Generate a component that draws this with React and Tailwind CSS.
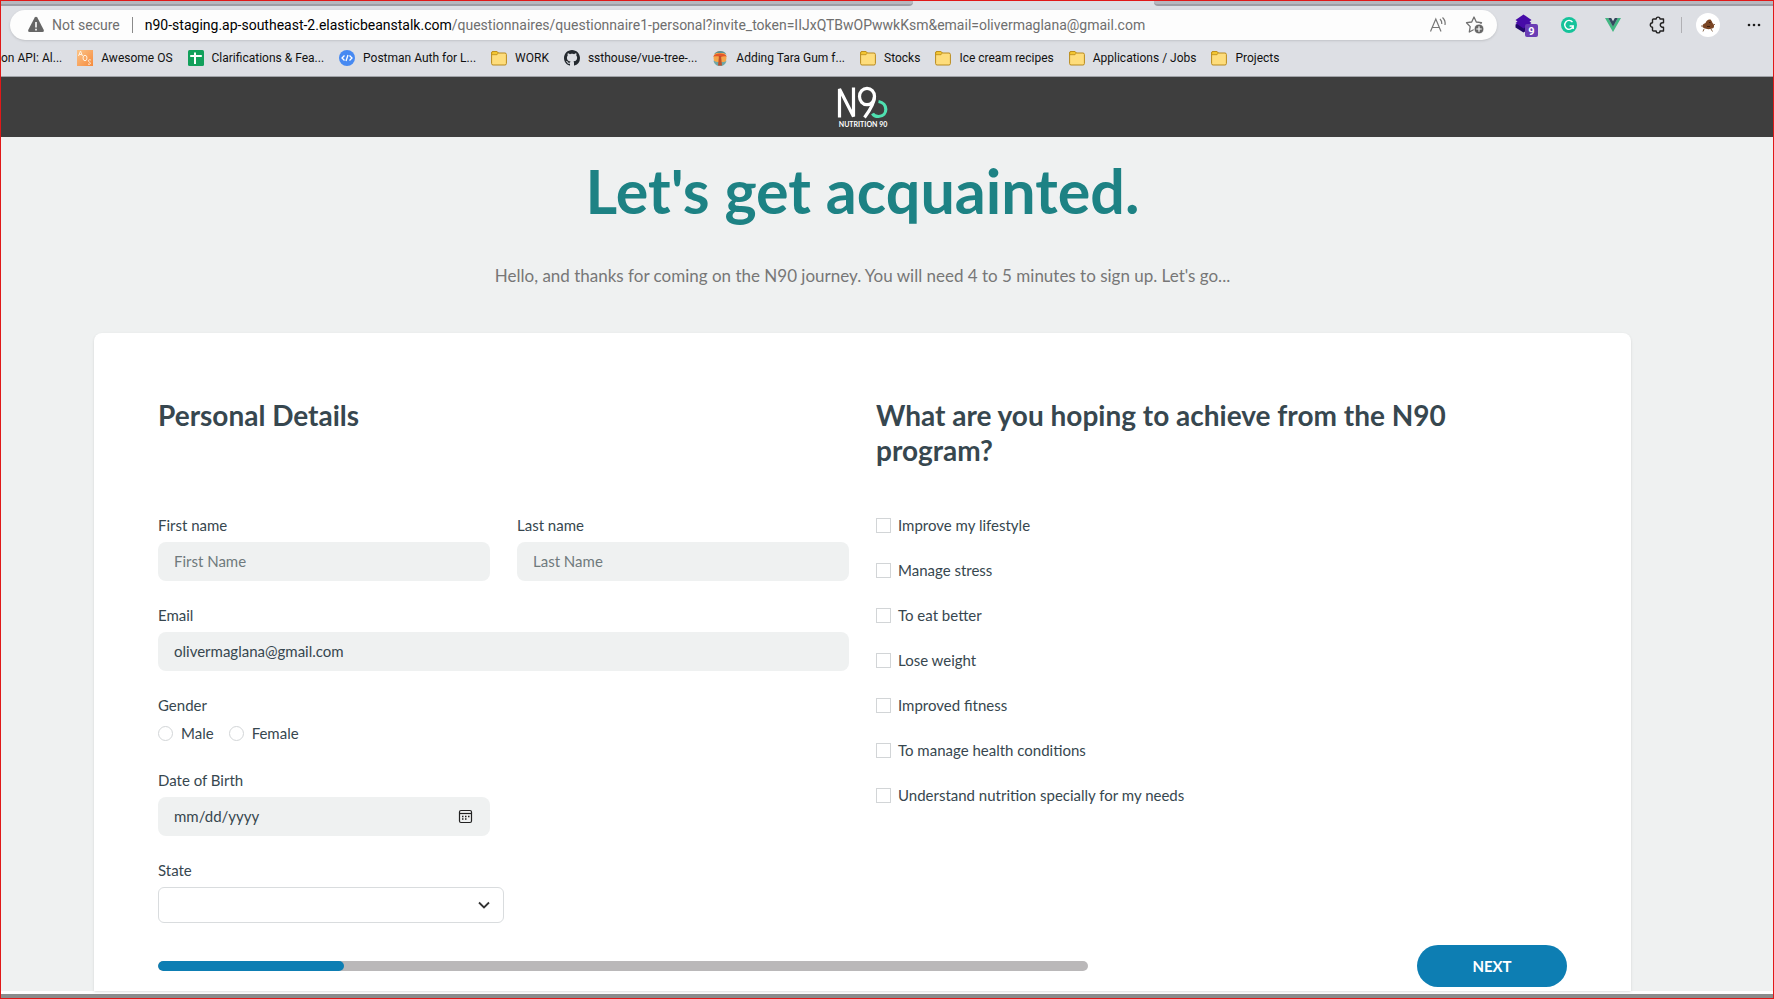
import React from "react";

const UI = "font-['Roboto',sans-serif]";

const Folder = () => (
  <svg width="16" height="18" viewBox="0 0 16 18" className="shrink-0">
    <path d="M.6 4Q.6 2.500 2.100 2.500H6L7.500 4h6.400q1.500 0 1.500 1.500v9q0 1.500-1.500 1.500H2.100Q.6 16 .6 14.500z" fill="#fedd7c" stroke="#b98a1c" />
    <path d="M.6 4Q.6 2.500 2 2.500h3.800L7.300 4 6 5.700H.6z" fill="#f3c632" stroke="#b98a1c" strokeWidth=".8" />
  </svg>
);

const Aos = () => (
  <svg width="16" height="18" viewBox="0 0 16 18" className="shrink-0">
    <defs>
      <linearGradient id="aos" x1="0" y1="0" x2="1" y2="1">
        <stop offset="0" stopColor="#fbc488" />
        <stop offset="1" stopColor="#f68a3c" />
      </linearGradient>
    </defs>
    <rect y="1" width="16" height="16" fill="url(#aos)" />
    <g fill="none" stroke="#fff3e2" strokeWidth="1">
      <path d="M1.500 7 3.500 2l2 5M2.200 5.500h2.600" />
      <ellipse cx="8" cy="9" rx="2" ry="2.700" />
      <path d="M13.800 11c-2.500-1-3.200 1.300-1.500 2s1.700 3-1.300 2" />
    </g>
  </svg>
);

const Sheet = () => (
  <svg width="16" height="18" viewBox="0 0 16 18" className="shrink-0">
    <rect y="1" width="16" height="16" rx="1.500" fill="#12a05b" />
    <path d="M7 3.500v11.500M2.200 7h11.600" stroke="#fff" strokeWidth="2" />
  </svg>
);

const CodeDot = () => (
  <svg width="16" height="18" viewBox="0 0 16 18" className="shrink-0">
    <circle cx="8" cy="9" r="8" fill="#4689f2" />
    <path d="M5.500 6.500 3 9l2.500 2.500M10.500 6.500 13 9l-2.500 2.500M9 6 7 12" fill="none" stroke="#fff" strokeWidth="1.300" />
  </svg>
);

const Github = () => (
  <svg width="16" height="16" viewBox="0 0 16 16" className="shrink-0">
    <path
      fill="#24292f"
      d="M8 0C3.580 0 0 3.580 0 8c0 3.540 2.290 6.530 5.470 7.590.4.070.55-.17.55-.38 0-.19-.01-.82-.01-1.490-2.010.37-2.530-.49-2.690-.94-.09-.23-.48-.94-.82-1.130-.28-.15-.68-.52-.01-.53.63-.01 1.080.58 1.230.82.72 1.210 1.870.87 2.330.66.07-.52.28-.87.51-1.070-1.780-.2-3.640-.89-3.640-3.950 0-.87.31-1.590.82-2.150-.08-.2-.36-1.020.08-2.120 0 0 .67-.21 2.200.82.64-.18 1.320-.27 2-.27s1.360.09 2 .27c1.530-1.040 2.200-.82 2.200-.82.44 1.100.16 1.920.08 2.120.51.56.82 1.270.82 2.150 0 3.070-1.870 3.750-3.650 3.950.29.25.54.73.54 1.480 0 1.070-.01 1.930-.01 2.200 0 .21.15.46.55.38A8.010 8.010 0 0 0 16 8c0-4.420-3.580-8-8-8z"
    />
  </svg>
);

const Palm = () => (
  <svg width="16" height="18" viewBox="0 0 16 18" className="shrink-0">
    <ellipse cx="8" cy="9" rx="6.500" ry="7" fill="#f4a64a" />
    <path d="M2 5.500C4 1 12 .500 14.500 5.500l-3-1.500-7 0z" fill="#5b9095" />
    <path d="M1 7.800c2-4.300 12-4.300 14 0-2-.8-4.500-.5-6 .3-2-.8-5.500-1-8-.3z" fill="#e2562b" />
    <path d="M1.500 11.500c2 1 3 1.500 5 1.500h4c2 0 3-.5 4-1.500-.5 3.500-3 5.500-6.500 5.500s-6-2-6.500-5.500z" fill="#6fa7a6" />
    <path d="M7 7h2l1 9.500H6z" fill="#c0502a" />
  </svg>
);

const BOOKMARKS = [
  [Aos, "Awesome OS"],
  [Sheet, "Clarifications & Fea..."],
  [CodeDot, "Postman Auth for L..."],
  [Folder, "WORK"],
  [Github, "ssthouse/vue-tree-..."],
  [Palm, "Adding Tara Gum f..."],
  [Folder, "Stocks"],
  [Folder, "Ice cream recipes"],
  [Folder, "Applications / Jobs"],
  [Folder, "Projects"],
];

function AddressBar() {
  return (
    <div className="flex h-[30px] grow items-center rounded-full bg-[#fdfdfd] pr-3 pl-[17px] text-sm text-[#6f6f6f] shadow-sm">
      <svg width="18" height="18" viewBox="0 0 18 18" className="shrink-0">
        <path d="M7.700 1.500q1.300-1.500 2.600 0l6.500 12.500q.7 2-1.300 2h-13q-2 0-1.300-2z" fill="#666" />
        <path d="M9 6v5.500M9 12.800v1.600" stroke="#fff" strokeWidth="1.600" />
      </svg>
      <span className="ml-[7px] whitespace-nowrap">Not secure</span>
      <span className="mx-3 h-4 w-px bg-[#8a8a8a]" />
      <span className="grow whitespace-nowrap">
        <span className="text-black">n90-staging.ap-southeast-2.elasticbeanstalk.com</span>
        /questionnaires/questionnaire1-personal?invite_token=IIJxQTBwOPwwkKsm&amp;email=olivermaglana@gmail.com
      </span>
      <button aria-label="Read aloud" className="mr-[18px]">
        <svg width="18" height="18" viewBox="0 0 18 18" fill="none" stroke="#777" strokeWidth="1.200">
          <path d="M1.500 15.500 6.800 3l5.200 12.500M3.500 11.500H10" />
          <path d="M11 3q2 1.800 1.800 5M13.500 1.500Q16.800 4.500 16 9" />
        </svg>
      </button>
      <button aria-label="Add to favorites">
        <svg width="20" height="20" viewBox="0 0 20 20">
          <path d="m9 2 2.300 5 5.200.7-3.800 3.900.9 5.400L9 14.500 4.300 17l.9-5.400L1.500 7.700 6.700 7z" fill="none" stroke="#707070" strokeWidth="1.300" strokeLinejoin="round" />
          <circle cx="14" cy="14" r="5" fill="#666" stroke="#fdfdfd" />
          <path d="M14 11.300v5.400M11.300 14h5.400" stroke="#fff" strokeWidth="1.200" />
        </svg>
      </button>
    </div>
  );
}

function Browser() {
  return (
    <div className={`bg-[#dddfe4] ${UI}`}>
      <div className="flex h-[5px]">
        <div className="w-[912px] rounded-br border-b-2 border-[#9d9ea5] bg-[#b7b8bf]" />
        <div className="w-[241px]" />
        <div className="grow rounded-bl border-b-2 border-[#9d9ea5] bg-[#b7b8bf]" />
      </div>
      <div className="flex h-[38px] items-center pl-[9px]">
        <AddressBar />
        <div className="flex w-[276px] shrink-0 items-center pl-[18px]">
          <button aria-label="Extension with 9 notices" className="mr-[22px]">
            <svg width="24" height="24" viewBox="0 0 24 24">
              <path d="M.5 11.500 8.500 8l8 3.500v3l-8 5-8-5z" fill="#22086b" />
              <path d="m8.500 1.500 8 5.500-2 1.500 2 1.500-8 5.500-8-5.500 2-1.500-2-1.500z" fill="#470ba8" />
              <rect x="10" y="11" width="13" height="13" rx="2" fill="#6a3db5" />
              <text x="16.500" y="21.500" fontSize="11" fontWeight="700" fill="#fff" textAnchor="middle">9</text>
            </svg>
          </button>
          <button aria-label="Grammar checker" className="mr-7">
            <svg width="16" height="18" viewBox="0 0 16 18">
              <circle cx="8" cy="9" r="8" fill="#15c39a" />
              <path d="M11.500 6.200A4.300 4.500 0 1 0 12.200 10H8.600M12.200 10v3" fill="none" stroke="#fff" strokeWidth="1.400" />
            </svg>
          </button>
          <button aria-label="Vue devtools" className="mr-7">
            <svg width="16" height="16" viewBox="0 0 16 16">
              <path d="M0 1h3.200L8 9.500 12.800 1H16L8 15z" fill="#42b883" />
              <path d="M3.200 1h3L8 4.200 9.800 1h3L8 9.800z" fill="#35495e" />
            </svg>
          </button>
          <button aria-label="Extensions" className="mr-[14px]">
            <svg width="18" height="18" viewBox="0 0 18 18" fill="none" stroke="#222" strokeWidth="1.400" strokeLinejoin="round">
              <path d="M4.500 3h2.700a1.900 1.900 0 0 1 3.800 0h3.500v3.800h-1a2.200 2.200 0 0 0 0 4.400h1V15H11a1.900 1.900 0 0 1-3.800 0H4.500q-1 0-1-1v-2.800a2.200 2.200 0 0 1 0-4.400V4q0-1 1-1z" />
            </svg>
          </button>
          <span className="mr-[14px] h-4 w-px bg-[#b0b0b4]" />
          <button aria-label="Profile" className="mr-[26px] flex size-6 items-center justify-center rounded-full bg-white">
            <svg width="16" height="16" viewBox="0 0 16 16">
              <path d="M2.500 10Q2 7 5.500 6 7 1.800 10.500 2.500 12 4 12.500 6q2.500 2 1 5-3 1.500-6.500 1-3.500-.5-4.500-2z" fill="#7a4524" />
              <path d="M7 9.500h3M9 5.500h1.500" stroke="#3d2010" />
              <path d="m4 12-1 2.500M11 12l1.500 2.500M2.500 9H1M14 8l1-1" stroke="#8a6a50" />
            </svg>
          </button>
          <button aria-label="Settings and more">
            <svg width="16" height="4" viewBox="0 0 16 4" fill="#1c1c1c">
              <circle cx="3" cy="2" r="1.300" />
              <circle cx="8" cy="2" r="1.300" />
              <circle cx="13" cy="2" r="1.300" />
            </svg>
          </button>
        </div>
      </div>
      <nav className="flex h-[33px] items-start gap-[15px] overflow-hidden border-b border-[#a0a3a8] pt-[5px] text-xs text-[#111]">
        <a href="#api" className="whitespace-nowrap leading-[18px]">on API: Al...</a>
        {BOOKMARKS.map(([Icon, name]) => (
          <a key={name} href="#bookmark" className="flex items-center gap-2 whitespace-nowrap leading-[18px]">
            <Icon />
            {name}
          </a>
        ))}
      </nav>
    </div>
  );
}

function Logo() {
  return (
    <svg width="52" height="42" viewBox="0 0 52 42" role="img" aria-label="Nutrition 90">
      <g fill="none" strokeWidth="3.200">
        <path d="M2.500 31.500V3L16.500 30.500V1.500" stroke="#fff" strokeLinejoin="bevel" />
        <ellipse cx="30" cy="10.500" rx="7.500" ry="8.200" stroke="#fff" />
        <path d="M37.500 10.500C37.500 17.500 32 25.500 27.500 31.500" stroke="#fff" />
        <path d="M41.500 15.500c9.500 1.500 10 14.500 0 15-3 0-5-1-6-3" stroke="#4fe0b0" />
      </g>
      <text x="26" y="41" fontSize="7" fontWeight="700" fill="#fff" textAnchor="middle">NUTRITION 90</text>
    </svg>
  );
}

const FIELD = "h-[39px] w-full rounded-lg bg-[#eff1f1] px-4 pb-0.5 text-[15px] text-[#37474f] placeholder-[#6f7a7d] outline-none";

function Field({ id, label, className = "", children }) {
  return (
    <div className={`flex flex-col ${className}`}>
      <label htmlFor={id} className="mb-[7px] leading-5">{label}</label>
      {children}
    </div>
  );
}

const GOALS = [
  "Improve my lifestyle",
  "Manage stress",
  "To eat better",
  "Lose weight",
  "Improved fitness",
  "To manage health conditions",
  "Understand nutrition specially for my needs",
];

export default function App() {
  return (
    <div className="flex min-h-screen flex-col border border-[#e01818] bg-white font-['Lato',sans-serif] text-[15px] text-[#37474f]">
      <Browser />
      <header className="flex h-[60px] items-center justify-center bg-[#3e3e3e] pr-12">
        <Logo />
      </header>
      <main className="bg-[#eff1f1] pr-[142px] pl-[93px]">
        <h1 className="pt-[18px] text-center text-[61px] leading-[72px] font-bold text-[#1d8284]">Let's get acquainted.</h1>
        <p className="pt-[37px] pb-[45px] text-center text-[17px] leading-6 text-[#777]">
          Hello, and thanks for coming on the N90 journey. You will need 4 to 5 minutes to sign up. Let's go...
        </p>
        <form className="rounded-t-lg bg-white px-16 pt-[65px] pb-1 shadow-sm" onSubmit={(e) => e.preventDefault()}>
          <div className="grid grid-cols-2 gap-x-[27px]">
            <h2 className="h-[117px] text-[28px] leading-[35px] font-bold">Personal Details</h2>
            <h2 className="text-[28px] leading-[35px] font-bold">What are you hoping to achieve from the N90 program?</h2>
            <div className="flex flex-col">
              <div className="grid grid-cols-2 gap-x-[27px]">
                <Field id="first" label="First name">
                  <input id="first" placeholder="First Name" className={FIELD} />
                </Field>
                <Field id="last" label="Last name">
                  <input id="last" placeholder="Last Name" className={FIELD} />
                </Field>
              </div>
              <Field id="email" label="Email" className="mt-6">
                <input id="email" type="email" defaultValue="olivermaglana@gmail.com" className={FIELD} />
              </Field>
              <fieldset className="mt-6">
                <legend className="leading-5">Gender</legend>
                <div className="mt-2 flex gap-[15px]">
                  {["Male", "Female"].map((g) => (
                    <label key={g} className="flex items-center gap-2 leading-5">
                      <input type="radio" name="gender" className="size-[15px] appearance-none rounded-full border border-[#d2d5d7] bg-white" />
                      {g}
                    </label>
                  ))}
                </div>
              </fieldset>
              <div className="grid grid-cols-2 gap-x-[27px]">
                <Field id="dob" label="Date of Birth" className="mt-[27px]">
                  <div className="relative">
                    <input id="dob" placeholder="mm/dd/yyyy" className={`${FIELD} placeholder-[#37474f]`} />
                    <button type="button" aria-label="Open calendar" className="absolute top-3 right-[17px]">
                      <svg width="15" height="15" viewBox="0 0 15 15" fill="none" stroke="#222">
                        <rect x="1.500" y="1.500" width="12" height="12" rx="1.500" strokeWidth="1.200" />
                        <path d="M1.500 4.500h12" strokeWidth="1.200" />
                        <path d="M4 7.500h7.500M4 10h4.500" strokeWidth="1.500" strokeDasharray="1.500 1.500" />
                      </svg>
                    </button>
                  </div>
                </Field>
              </div>
              <Field id="state" label="State" className="mt-6 w-1/2">
                <div className="relative">
                  <select id="state" className="block h-9 w-full appearance-none rounded-md border border-[#d9dcde] bg-white px-4 outline-none" />
                  <svg width="12" height="8" viewBox="0 0 12 8" className="pointer-events-none absolute top-3.5 right-3.5" fill="none" stroke="#333" strokeWidth="1.800">
                    <path d="m1 1.500 5 5 5-5" />
                  </svg>
                </div>
              </Field>
            </div>
            <div className="flex flex-col gap-[25px]">
              {GOALS.map((goal) => (
                <label key={goal} className="flex items-center gap-[7px] leading-5">
                  <input type="checkbox" className="size-[15px] appearance-none border border-[#d2d5d7] bg-white" />
                  {goal}
                </label>
              ))}
            </div>
          </div>
          <div className="flex items-center justify-between pt-[22px]">
            <div role="progressbar" aria-label="Sign-up progress" aria-valuenow={20} className="h-2.5 w-[66%] overflow-hidden rounded-full bg-[#bab8b9]">
              <div className="h-full w-1/5 rounded-full bg-[#0d7eb3]" />
            </div>
            <button className="h-[42px] w-[150px] rounded-full bg-[#0d7eb3] text-[15px] font-bold text-white">NEXT</button>
          </div>
        </form>
      </main>
      <div className="mt-auto h-1 bg-[#8a8c8c]" />
    </div>
  );
}
